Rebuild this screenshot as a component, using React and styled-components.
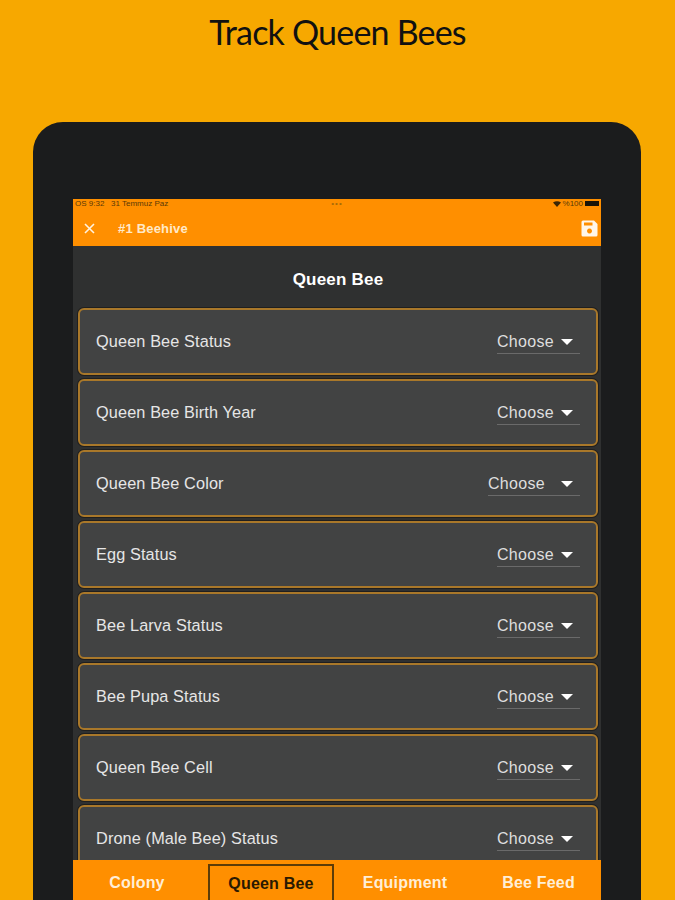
import React from "react";
import styled, { createGlobalStyle } from "styled-components";

const GlobalStyle = createGlobalStyle`
  html, body { margin: 0; padding: 0; height: 900px; overflow: hidden; background: #f7a800; }
  * { box-sizing: border-box; }
`;

const Page = styled.div`
  width: 675px;
  height: 900px;
  overflow: hidden;
  background: #f7a800;
  display: flex;
  flex-direction: column;
  align-items: center;
`;

const Headline = styled.h1`
  margin: 0;
  height: 122px;
  padding-top: 11px;
  font-family: "Lato", sans-serif;
  font-weight: 400;
  font-size: 34px;
  line-height: 42px;
  letter-spacing: -0.8px;
  color: #111;
`;

const Tablet = styled.div`
  width: 608px;
  flex: 1;
  min-height: 0;
  align-self: flex-start;
  margin-left: 33px;
  background: #1b1c1d;
  border-radius: 30px 30px 0 0;
  padding: 77px 40px 0;
  display: flex;
`;

const Screen = styled.div`
  width: 528px;
  background: #2f3030;
  display: flex;
  flex-direction: column;
  font-family: "Liberation Sans", Arial, sans-serif;
`;

const TopBar = styled.div`
  height: 47px;
  flex: none;
  background: #ff8f00;
  display: flex;
  flex-direction: column;
`;

const StatusBar = styled.div`
  height: 9px;
  padding: 0 2px 0 2px;
  display: grid;
  grid-template-columns: 1fr auto 1fr;
  align-items: center;
  font-size: 8px;
  line-height: 9px;
  color: #5a3a08;
`;

const StatusDots = styled.span`
  font-size: 8px;
  letter-spacing: 1px;
  color: #a86a08;
`;

const StatusRight = styled.div`
  justify-self: end;
  display: flex;
  align-items: center;
  gap: 2px;
`;

const Battery = styled.span`
  width: 14px;
  height: 5px;
  background: #1a1408;
`;

const NavRow = styled.div`
  flex: 1;
  display: flex;
  align-items: center;
  padding: 2px 3px 0 11px;
`;

const NavTitle = styled.span`
  margin-left: 23px;
  font-size: 13px;
  font-weight: 700;
  letter-spacing: 0.2px;
  color: #ffe9c8;
`;

const SaveButton = styled.span`
  margin-left: auto;
  display: flex;
`;

const Content = styled.div`
  flex: 1;
  min-height: 0;
  overflow: hidden;
  padding: 0 3px 0 5px;
`;

const SectionTitle = styled.h2`
  margin: 0;
  height: 62px;
  padding-top: 5px;
  display: flex;
  align-items: center;
  justify-content: center;
  font-size: 17px;
  font-weight: 700;
  letter-spacing: 0.2px;
  color: #fff;
`;

const Card = styled.div`
  height: 67px;
  margin-bottom: 4px;
  background: #424343;
  border: 2px solid #a9782a;
  border-radius: 6px;
  display: flex;
  align-items: center;
  justify-content: space-between;
  padding: 0 16px;
  box-shadow: 0 0 0 1px #1f1f1f;
`;

const CardLabel = styled.span`
  font-size: 16.3px;
  letter-spacing: 0.12px;
  color: #e6e6e6;
`;

const Select = styled.div`
  width: ${(p) => (p.$wide ? "92px" : "83px")};
  height: 23px;
  border-bottom: 1px solid #6a6a6a;
  display: flex;
  align-items: center;
  justify-content: space-between;
  padding-right: 7px;
  margin-top: 1px;
  font-size: 16px;
  letter-spacing: 0.3px;
  color: #dedede;
`;

const Caret = styled.span`
  width: 0;
  height: 0;
  border-left: 6px solid transparent;
  border-right: 6px solid transparent;
  border-top: 6px solid #fff;
`;

const TabBar = styled.div`
  height: 40px;
  flex: none;
  background: #ff8f00;
  display: flex;
  padding-top: 4px;
`;

const Tab = styled.div`
  width: ${(p) => p.$width}px;
  margin-left: ${(p) => p.$gap || 0}px;
  display: flex;
  align-items: center;
  justify-content: center;
  padding-top: 1px;
  font-size: 16px;
  font-weight: 700;
  letter-spacing: 0.2px;
  color: ${(p) => (p.$active ? "#2a1a02" : "#ffeed6")};
  border: ${(p) => (p.$active ? "2px solid #5c3c08" : "none")};
  border-bottom: none;
`;

const rows = [
  "Queen Bee Status",
  "Queen Bee Birth Year",
  "Queen Bee Color",
  "Egg Status",
  "Bee Larva Status",
  "Bee Pupa Status",
  "Queen Bee Cell",
  "Drone (Male Bee) Status",
];

const CloseIcon = () => (
  <svg width="11" height="11" viewBox="0 0 11 11">
    <path d="M1 1l9 9M10 1l-9 9" stroke="#fff2df" strokeWidth="1.6" fill="none" />
  </svg>
);

const SaveIcon = () => (
  <svg width="17" height="17" viewBox="0 0 17 17">
    <path
      fillRule="evenodd"
      fill="#fff6ea"
      d="M2 0.5h11l3.5 3.500v11a1.500 1.500 0 0 1-1.500 1.500h-13a1.500 1.500 0 0 1-1.500-1.500v-13a1.500 1.500 0 0 1 1.500-1.500zM3 2.500v3h8.500v-3zM8.500 8.500a2.500 2.500 0 1 0 0.010 0z"
    />
  </svg>
);

const WifiIcon = () => (
  <svg width="8" height="6" viewBox="0 0 8 6">
    <path d="M0 1.500Q4-1 8 1.500L4 6z" fill="#3a2606" />
  </svg>
);

export default function App() {
  return (
    <Page>
      <GlobalStyle />
      <Headline>Track Queen Bees</Headline>
      <Tablet>
        <Screen>
          <TopBar>
            <StatusBar>
              <span>OS 9:32 &nbsp; 31 Temmuz Paz</span>
              <StatusDots>•••</StatusDots>
              <StatusRight>
                <WifiIcon />
                <span>%100</span>
                <Battery />
              </StatusRight>
            </StatusBar>
            <NavRow>
              <CloseIcon />
              <NavTitle>#1 Beehive</NavTitle>
              <SaveButton>
                <SaveIcon />
              </SaveButton>
            </NavRow>
          </TopBar>
          <Content>
            <SectionTitle>Queen Bee</SectionTitle>
            {rows.map((row) => (
              <Card key={row}>
                <CardLabel>{row}</CardLabel>
                <Select $wide={row === "Queen Bee Color"}>
                  Choose
                  <Caret />
                </Select>
              </Card>
            ))}
          </Content>
          <TabBar>
            <Tab $width={128}>Colony</Tab>
            <Tab $width={126} $gap={7} $active>
              Queen Bee
            </Tab>
            <Tab $width={142}>Equipment</Tab>
            <Tab $width={125}>Bee Feed</Tab>
          </TabBar>
        </Screen>
      </Tablet>
    </Page>
  );
}
